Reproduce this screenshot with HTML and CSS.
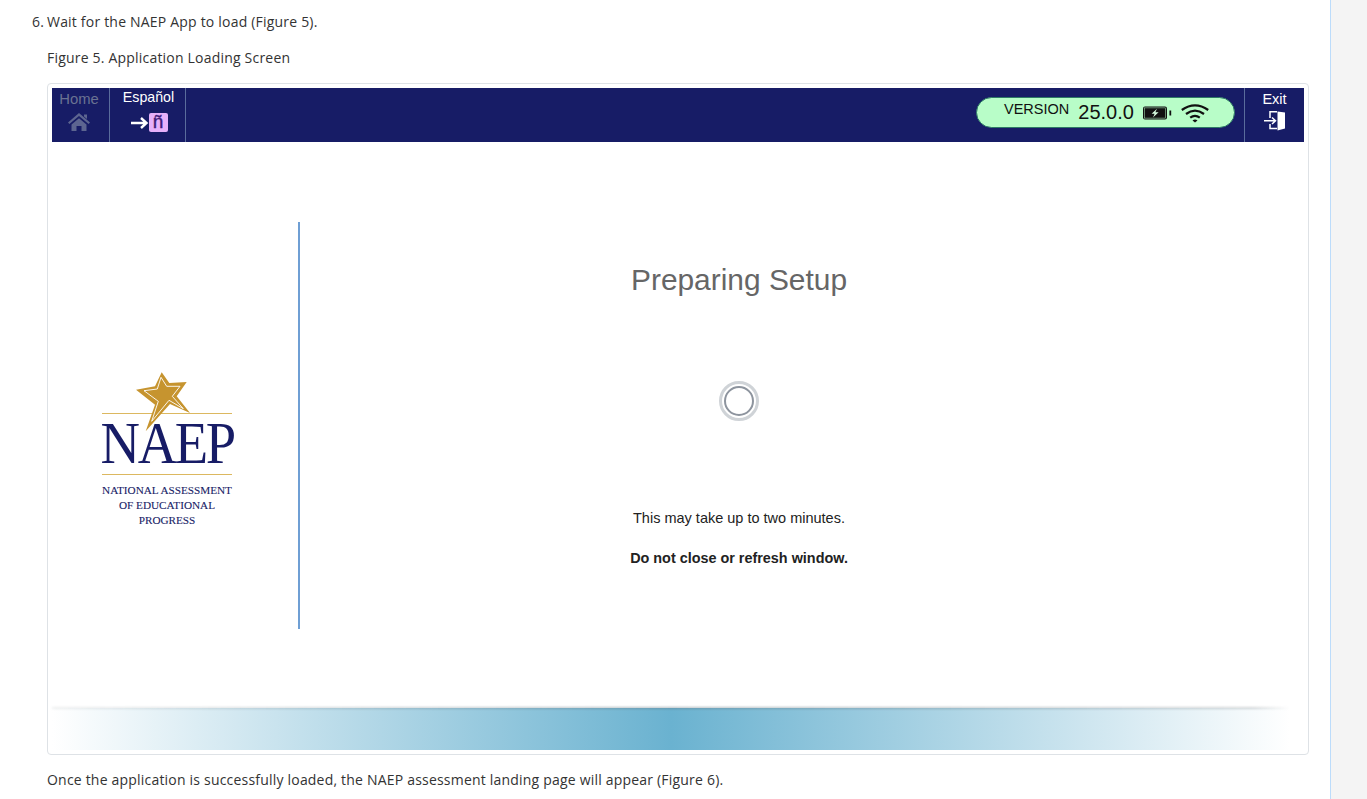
FILE: index.html
```html
<!DOCTYPE html>
<html lang="en">
<head>
  <meta charset="UTF-8" />
  <title>NAEP App Loading</title>
  <link rel="stylesheet" href="styles.css">
</head>
<body>

<div class="page">
  <main class="main">
    <p class="step"><span class="step-num">6.</span>Wait for the NAEP App to load (Figure 5).</p>
    <p class="caption">Figure 5. Application Loading Screen</p>

    <div class="thumbnail">
      <div class="app-bar">
        <div class="bar-btn home-btn">
          <span class="bar-label">Home</span>
          <svg class="home-icon" width="24" height="20" viewBox="0 0 24 20">
            <path d="M12 1 L23 10.5 L21.6 12 L12 4 L2.4 12 L1 10.5 Z M17 2.5 H20 V7 L17 4.5 Z M4.5 12.5 L12 6.2 L19.5 12.5 V19 H14.5 V14 H9.5 V19 H4.5 Z" fill="#5d6590"/>
          </svg>
        </div>
        <div class="bar-btn lang-btn">
          <span class="bar-label">Español</span>
          <div class="lang-icon">
            <svg width="19" height="14" viewBox="0 0 19 14">
              <path d="M1 7 H16 M11 2 L16.5 7 L11 12" fill="none" stroke="#fff" stroke-width="2.4"/>
            </svg>
            <span class="lang-box">ñ</span>
          </div>
        </div>

        <div class="status-wrap">
          <div class="status-pill">
            <span class="version-label">VERSION</span>
            <span class="version-num">25.0.0</span>
            <svg class="battery" width="30" height="14" viewBox="0 0 30 14">
              <rect x="1" y="0.5" width="24" height="13" rx="2" fill="#111"/>
              <rect x="2.4" y="1.9" width="21.2" height="10.2" fill="none" stroke="#b8fdc8" stroke-width="0.5"/>
              <path d="M15 2.8 L9.6 7.8 H12.6 L11 11.4 L16.6 6.2 H13.4 Z" fill="#d8fde0"/>
              <rect x="27.4" y="4.5" width="1.8" height="5" fill="#111"/>
            </svg>
            <svg class="wifi" width="28" height="20" viewBox="0 0 28 20">
              <path d="M0.8 7 Q14 -2.4 27.2 7 M5 11 Q14 4.2 23 11 M9.2 14.6 Q14 11 18.8 14.6" fill="none" stroke="#111" stroke-width="2.2"/>
              <path d="M11.5 17.4 Q14 15.8 16.5 17.4 L14 19.6 Z" fill="#111"/>
            </svg>
          </div>
        </div>

        <div class="bar-btn exit-btn">
          <span class="bar-label">Exit</span>
          <svg width="22" height="20" viewBox="0 0 22 20">
            <path d="M0 9.7 H11 M8 6.5 L11.5 9.7 L8 13 M6 7 V0.8 H13 M6 13 V17.5 H13" fill="none" stroke="#fff" stroke-width="1.5"/>
            <polygon points="13.5,0.5 21,1.5 21,17.5 13.5,19.5" fill="#fff"/>
          </svg>
        </div>
      </div>

      <div class="app-body">
        <div class="logo-col">
          <div class="logo">
            <svg class="logo-star" width="56" height="62" viewBox="0 0 56 62">
              <polygon points="25.7,0.3 33.3,11 50.7,10 40.7,24.3 54,41 34,32 9.7,59.3 19,32.7 0,17.7 19,14.3" fill="#c6942f"/>
              <polygon points="25,5.3 30.7,14.3 44,14.3 36.3,24.3 47.3,36.7 33,28.3 15.7,49.3 22.3,29.3 8,18.7 21.3,17" fill="none" stroke="#fff" stroke-width="0.9"/>
            </svg>
            <div class="logo-rule"></div>
            <div class="logo-word">NAEP</div>
            <div class="logo-rule"></div>
            <div class="logo-sub">NATIONAL ASSESSMENT<br>OF EDUCATIONAL<br>PROGRESS</div>
          </div>
        </div>

        <div class="loading-col">
          <h2 class="loading-title">Preparing Setup</h2>
          <div class="spinner"><div class="spinner-inner"></div></div>
          <p class="loading-note">This may take up to two minutes.</p>
          <p class="loading-warn">Do not close or refresh window.</p>
        </div>
      </div>

      <div class="app-footer"></div>
    </div>

    <p class="after">Once the application is successfully loaded, the NAEP assessment landing page will appear (Figure 6).</p>
  </main>

  <aside class="side"></aside>
</div>

</body>
</html>
```

FILE: styles.css
```css
html, body {
  height: 100%;
}

body {
  margin: 0;
  background: #fff;
  color: #333;
  font-family: 'Open Sans', sans-serif;
  font-size: 14px;
  letter-spacing: 0.2px;
  overflow: hidden;
}

.page {
  display: flex;
  height: 799px;
  overflow: hidden;
}

.main {
  width: 1330px;
  flex: none;
  padding: 12px 21px 0 47px;
  box-sizing: border-box;
}

.side {
  flex: 1;
  background: #f4f4f4;
  border-left: 1px solid #bcdcfb;
}

p {
  margin: 0;
}

.step {
  position: relative;
  line-height: 20px;
}

.step-num {
  position: absolute;
  left: -15px;
}

.caption {
  margin-top: 16px;
  line-height: 20px;
}

.thumbnail {
  margin-top: 15px;
  height: 672px;
  box-sizing: border-box;
  padding: 4px;
  border: 1px solid #dee2e6;
  border-radius: 4px;
  display: flex;
  flex-direction: column;
}

.after {
  margin-top: 15px;
  line-height: 20px;
}

/* app header */
.app-bar {
  height: 54px;
  flex: none;
  background: #171c66;
  display: flex;
  font-family: 'Liberation Sans', sans-serif;
  letter-spacing: 0;
  color: #fff;
}

.bar-btn {
  display: flex;
  flex-direction: column;
  align-items: center;
  border-right: 1px solid #5a6c9c;
  box-sizing: border-box;
}

.bar-label {
  font-size: 14.5px;
  line-height: 16px;
}

.home-btn {
  width: 58px;
  padding: 3px 3px 0 0;
  color: #6a7292;
}

.home-btn .bar-label {
  font-size: 14.8px;
}

.home-icon {
  margin-top: 5px;
}

.lang-btn {
  width: 76px;
  padding: 1px 0 0 2px;
}

.lang-btn .bar-label {
  font-size: 14.2px;
}

.lang-icon {
  display: flex;
  align-items: center;
  margin-top: 8px;
}

.lang-box {
  width: 19px;
  height: 19px;
  border-radius: 2px;
  background: #e6b0fa;
  color: #3d1a78;
  font-size: 19px;
  line-height: 18px;
  text-align: center;
  -webkit-text-stroke: 0.4px #3d1a78;
}

.status-wrap {
  flex: 1;
  display: flex;
  justify-content: flex-end;
  padding: 9px 9px 0 0;
}

.status-pill {
  width: 259px;
  height: 31px;
  box-sizing: border-box;
  border: 1px solid #2d7a66;
  border-radius: 16px;
  background: #b8fdc8;
  color: #111;
  display: flex;
  align-items: center;
  padding-left: 27px;
}

.version-label {
  font-size: 14.5px;
  margin-top: -7px;
}

.version-num {
  font-size: 20px;
  margin-left: 9px;
}

.battery {
  margin-left: 8px;
}

.wifi {
  margin-left: 9px;
}

.exit-btn {
  width: 60px;
  border-right: 0;
  border-left: 1px solid #5a6c9c;
  padding-top: 3px;
}

.exit-btn svg {
  margin-top: 4px;
}

/* app content */
.app-body {
  flex: 1;
  display: flex;
  font-family: 'Liberation Sans', sans-serif;
  letter-spacing: 0;
  padding-top: 80px;
  box-sizing: border-box;
}

.logo-col {
  width: 248px;
  height: 407px;
  flex: none;
  box-sizing: border-box;
  border-right: 2px solid #6f9fd4;
  padding: 150px 0 0 49px;
}

.logo {
  width: 132px;
  position: relative;
  display: flex;
  flex-direction: column;
  align-items: center;
  color: #171c66;
  font-family: 'Liberation Serif', serif;
}

.logo-star {
  position: absolute;
  top: 0;
  left: 35px;
  z-index: 1;
}

.logo-rule {
  width: 130px;
  height: 1px;
  background: #dcb860;
  flex: none;
}

.logo > .logo-rule:first-of-type {
  margin-top: 41px;
}

.logo-word {
  font-size: 60px;
  line-height: 58px;
  letter-spacing: -2.6px;
  height: 60px;
  white-space: nowrap;
  transform: scaleX(0.91);
}

.logo-sub {
  margin-top: 8px;
  font-size: 11.2px;
  line-height: 15px;
  text-align: center;
  white-space: nowrap;
  -webkit-text-stroke: 0.1px #171c66;
}

.loading-col {
  flex: 1;
  display: flex;
  flex-direction: column;
  align-items: center;
  color: #222;
  font-size: 14.5px;
  padding-right: 126px;
}

.loading-title {
  margin: 41px 0 0;
  font-size: 29.9px;
  line-height: 34px;
  font-weight: normal;
  color: #666;
}

.spinner {
  margin-top: 84px;
  width: 40px;
  height: 40px;
  box-sizing: border-box;
  border: 3px solid #cfd3d7;
  border-radius: 50%;
  padding: 2px;
}

.spinner-inner {
  width: 100%;
  height: 100%;
  box-sizing: border-box;
  border: 2px solid #8d949e;
  border-radius: 50%;
}

.loading-note {
  margin-top: 89px;
  line-height: 16px;
}

.loading-warn {
  margin-top: 24px;
  line-height: 16px;
  font-size: 14.4px;
  font-weight: bold;
}

/* gradient strip at bottom */
.app-footer {
  position: relative;
  height: 42px;
  flex: none;
  margin-right: 14px;
  background: linear-gradient(90deg, #fff 0%, #6ab2d0 50%, #fff 100%);
}

.app-footer::before {
  content: "";
  position: absolute;
  top: -1px;
  left: 0;
  right: 0;
  height: 2px;
  background: linear-gradient(90deg, rgba(110, 120, 125, 0.12) 0%, rgba(100, 120, 130, 0.5) 50%, rgba(110, 120, 125, 0.3) 97%, transparent 100%);
  filter: blur(1px);
}
```
